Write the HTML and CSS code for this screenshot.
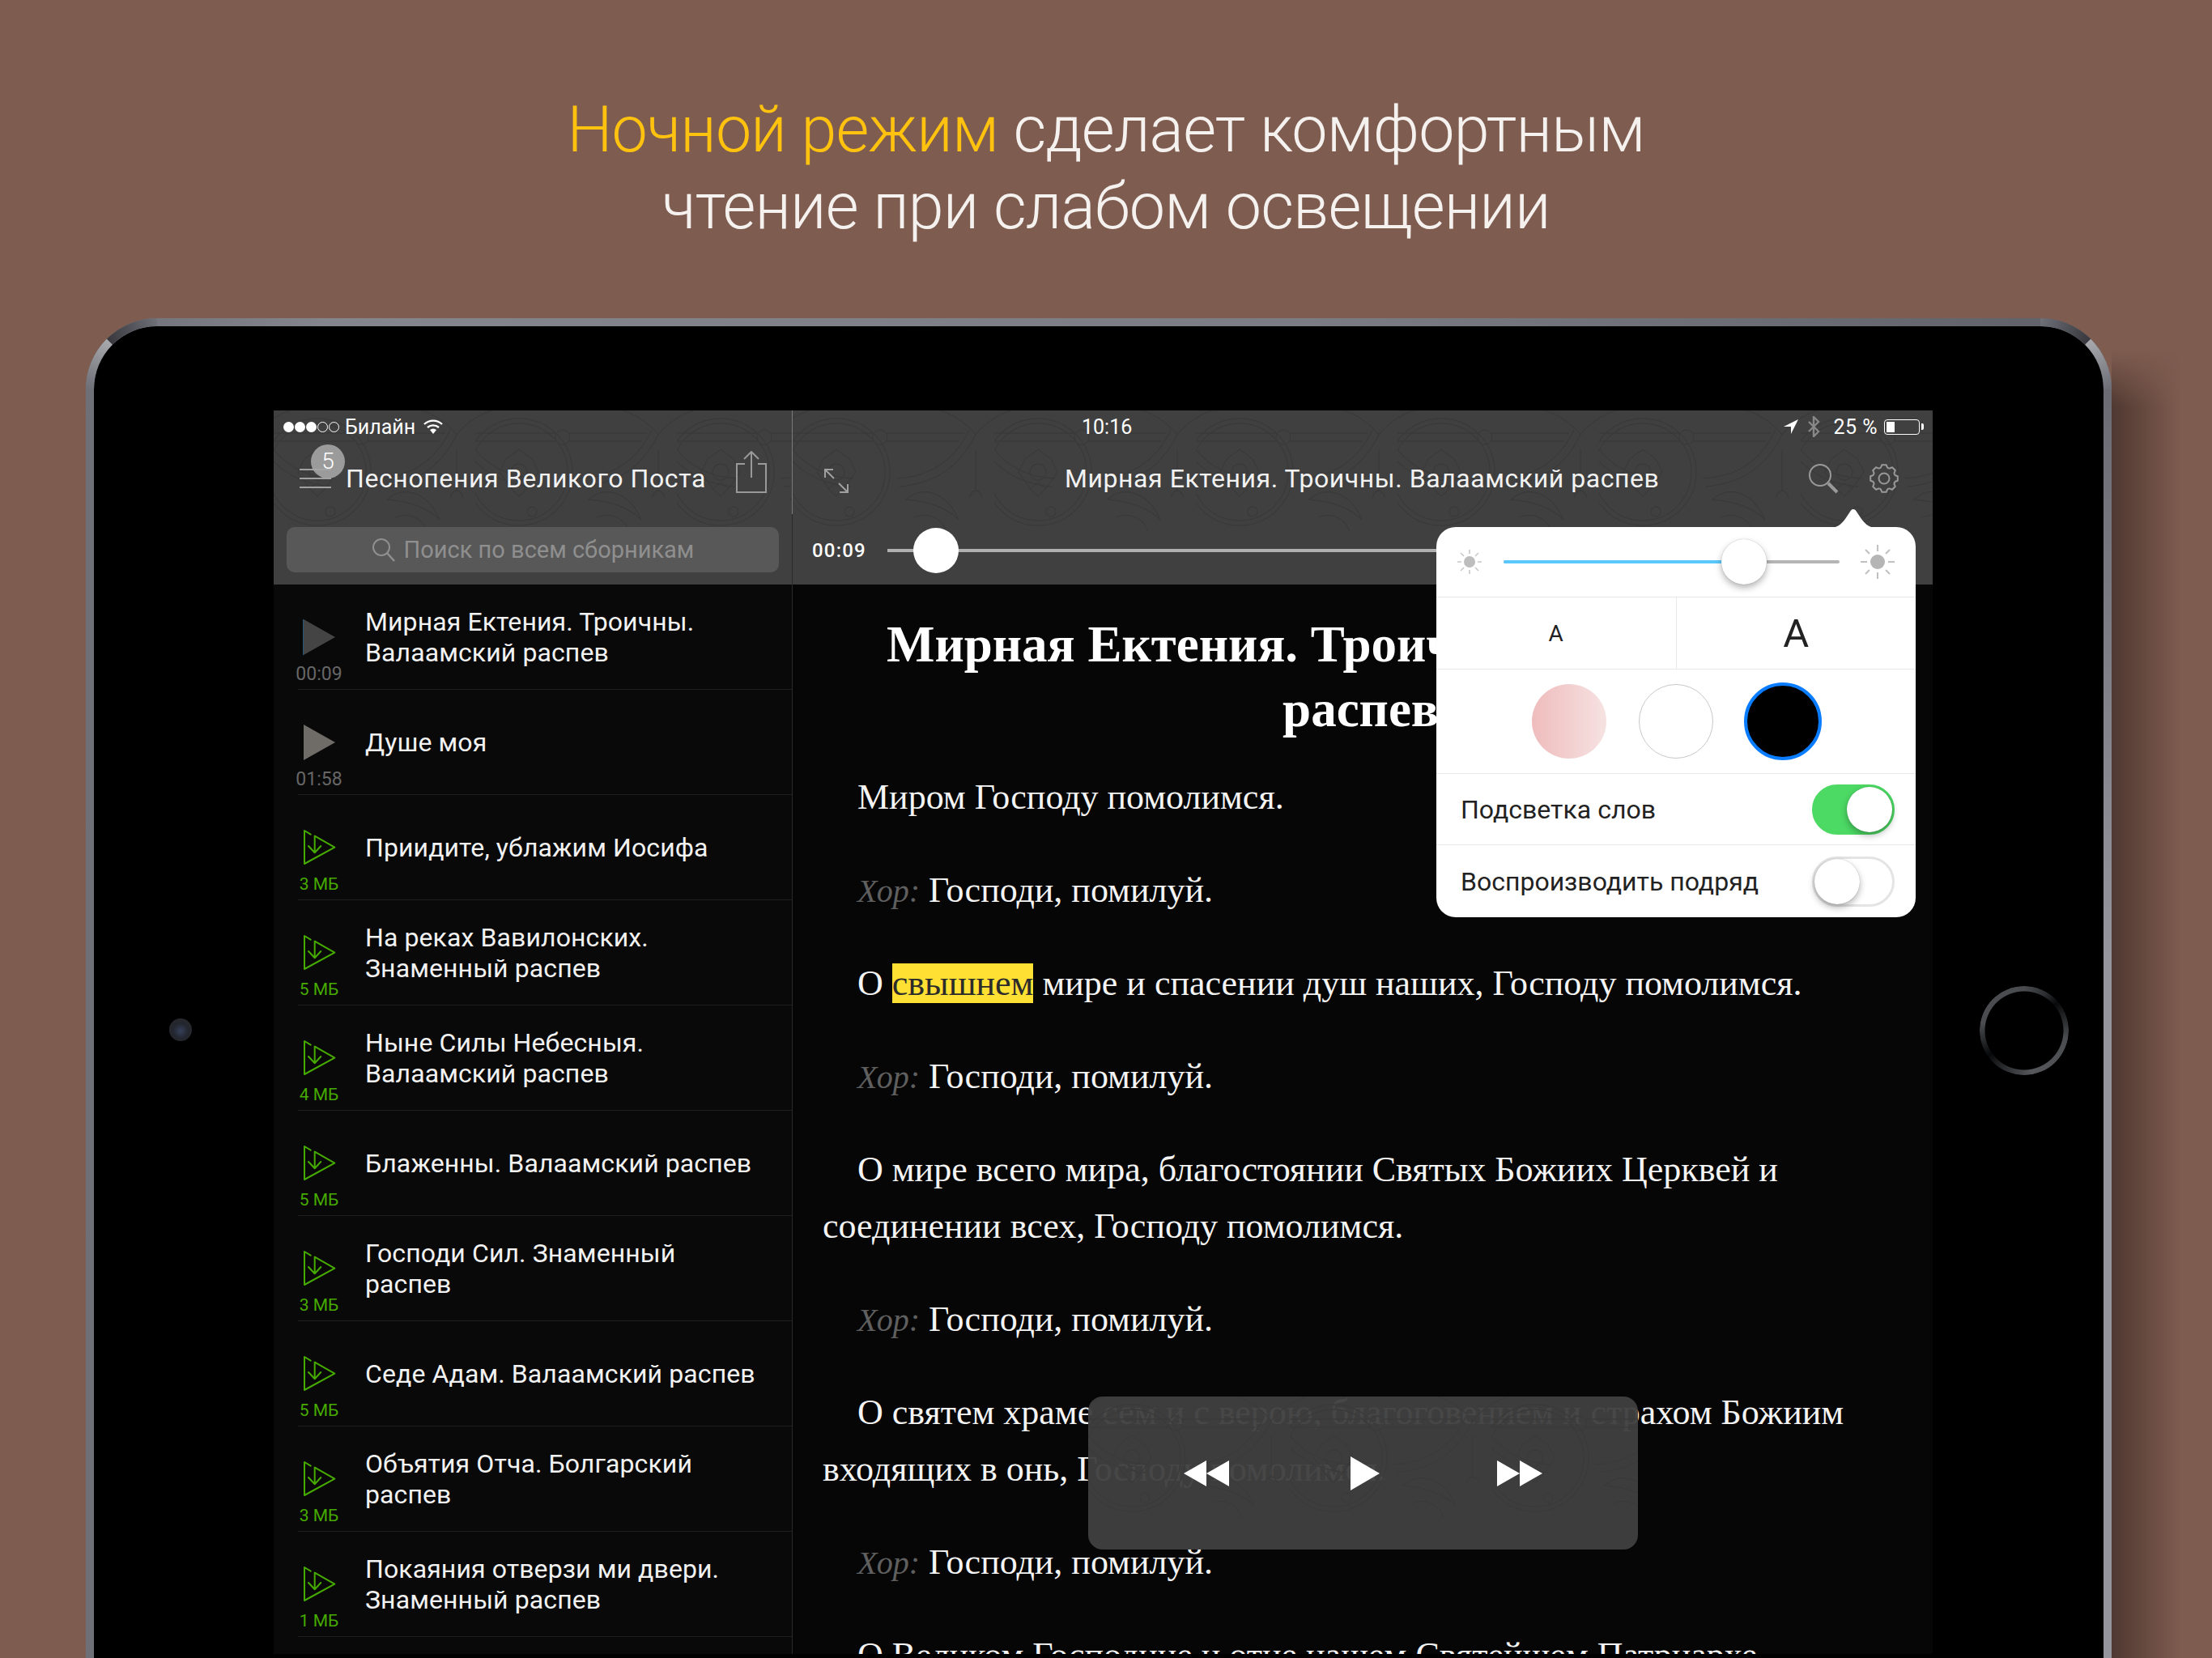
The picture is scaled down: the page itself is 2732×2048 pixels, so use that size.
FILE: index.html
```html
<!DOCTYPE html>
<html lang="ru">
<head>
    <meta charset="UTF-8">
    <title>Ночной режим</title>
    <link rel="stylesheet" href="styles.css">
</head>
<body>
<svg class="defs" width="0" height="0">
    <defs>
        <linearGradient id="arcDark" gradientUnits="userSpaceOnUse" x1="29" y1="29" x2="88" y2="5">
            <stop offset="0" stop-color="#38383e"/>
            <stop offset="1" stop-color="#6e6f77"/>
        </linearGradient>
        <linearGradient id="arcLight" gradientUnits="userSpaceOnUse" x1="29" y1="29" x2="5" y2="88">
            <stop offset="0" stop-color="#a8a9ad"/>
            <stop offset="1" stop-color="#6e6f77"/>
        </linearGradient>
        <pattern id="ornament" width="249" height="215" patternUnits="userSpaceOnUse">
            <g fill="none" stroke="#393939" stroke-width="1.300">
                <path d="M0 28H100M116 28H212M0 38H100M116 38H206"/>
                <circle cx="108" cy="33" r="9"/>
                <circle cx="54" cy="76" r="66"/>
                <circle cx="54" cy="76" r="60"/>
                <circle cx="54" cy="76" r="10"/>
                <path d="M54 48l16 12 8 16-14 20-10-6-10 6-14-20 8-16zM44 96l10 10 10-10"/>
                <circle cx="70" cy="125" r="6"/>
                <path d="M226 30C206 70 176 90 132 94M218 24C200 62 170 82 128 84"/>
                <path d="M226 30C246 70 276 90 320 94M234 24C252 62 282 82 324 84" transform="translate(-249)"/>
                <path d="M226 30C212 12 194 2 170 -4M226 30C240 12 258 2 282 -4"/>
                <path d="M-23 30C-9 12 9 2 33 -4"/>
                <path d="M140 110C160 92 190 100 205 135C188 118 165 112 140 110zM150 132C170 124 186 136 190 150"/>
                <path d="M226 48V100M218 108C222 96 230 96 234 108"/>
            </g>
        </pattern>
        <path id="tooth" d="M12.470-5.170L14-3.800 16.800-2.700V2.700L14 3.800 12.470 5.170"/>
    </defs>
</svg>

<h1 class="headline"><span class="accent">Ночной режим</span> сделает комфортным<br>чтение при слабом освещении</h1>

<div class="device">
    <svg class="corner corner-left" width="90" height="90" viewBox="0 0 90 90"><path d="M29.300 29.300A83 83 0 0 1 88 5" fill="none" stroke="url(#arcDark)" stroke-width="10"/><path d="M5 88A83 83 0 0 1 29.300 29.300" fill="none" stroke="url(#arcLight)" stroke-width="10"/></svg>
    <svg class="corner corner-right" width="90" height="90" viewBox="0 0 90 90"><path d="M29.300 29.300A83 83 0 0 1 88 5" fill="none" stroke="url(#arcDark)" stroke-width="10"/><path d="M5 88A83 83 0 0 1 29.300 29.300" fill="none" stroke="url(#arcLight)" stroke-width="10"/></svg>
    <div class="bezel">
        <div class="camera"></div>
        <div class="home-button"></div>
        <div class="screen">
            <aside class="sidebar">
                <div class="bar">
                    <svg class="ornament"><rect width="100%" height="100%" fill="url(#ornament)"/></svg>
                    <div class="status">
                        <span class="signal"><i class="dot"></i><i class="dot"></i><i class="dot"></i><i class="dot off"></i><i class="dot off"></i></span>
                        <span>Билайн</span>
                        <svg class="wifi" width="26" height="18" viewBox="0 0 26 18"><path d="M2 6a16 16 0 0 1 22 0M6 10a10.500 10.500 0 0 1 14 0" fill="none" stroke="#fff" stroke-width="2.400"/><path d="M9 13a6 6 0 0 1 8 0l-4 5z" fill="#fff"/></svg>
                    </div>
                    <div class="nav nav-left">
                        <div class="burger">
                            <i></i><i></i><i></i>
                            <span class="badge">5</span>
                        </div>
                        <span class="nav-title">Песнопения Великого Поста</span>
                        <svg class="share" width="38" height="52" viewBox="0 0 38 52"><path d="M11 16H1V51H37V16H27M19 33V2M10 10l9-9 9 9" fill="none" stroke="#999" stroke-width="2"/></svg>
                    </div>
                    <div class="search-wrap">
                        <div class="search">
                            <svg width="30" height="30" viewBox="0 0 30 30"><circle cx="12" cy="12" r="10" fill="none" stroke="#8f8f8f" stroke-width="2"/><path d="M19 19l9 10" stroke="#8f8f8f" stroke-width="2.500"/></svg>
                            <span>Поиск по всем сборникам</span>
                        </div>
                    </div>
                </div>
                <ul class="tracks">
                    <li class="track">
                        <div class="track-side"><span class="tri tri-current"></span><span class="size">00:09</span></div>
                        <div class="track-name">Мирная Ектения. Троичны.<br>Валаамский распев</div>
                    </li>
                    <li class="track">
                        <div class="track-side"><span class="tri"></span><span class="size">01:58</span></div>
                        <div class="track-name">Душе моя</div>
                    </li>
                    <li class="track">
                        <div class="track-side"><svg class="dl"><use href="#dl"/></svg><span class="size mb">3 МБ</span></div>
                        <div class="track-name">Приидите, ублажим Иосифа</div>
                    </li>
                    <li class="track">
                        <div class="track-side"><svg class="dl"><use href="#dl"/></svg><span class="size mb">5 МБ</span></div>
                        <div class="track-name">На реках Вавилонских.<br>Знаменный распев</div>
                    </li>
                    <li class="track">
                        <div class="track-side"><svg class="dl"><use href="#dl"/></svg><span class="size mb">4 МБ</span></div>
                        <div class="track-name">Ныне Силы Небесныя.<br>Валаамский распев</div>
                    </li>
                    <li class="track">
                        <div class="track-side"><svg class="dl"><use href="#dl"/></svg><span class="size mb">5 МБ</span></div>
                        <div class="track-name">Блаженны. Валаамский распев</div>
                    </li>
                    <li class="track">
                        <div class="track-side"><svg class="dl"><use href="#dl"/></svg><span class="size mb">3 МБ</span></div>
                        <div class="track-name">Господи Сил. Знаменный<br>распев</div>
                    </li>
                    <li class="track">
                        <div class="track-side"><svg class="dl"><use href="#dl"/></svg><span class="size mb">5 МБ</span></div>
                        <div class="track-name">Седе Адам. Валаамский распев</div>
                    </li>
                    <li class="track">
                        <div class="track-side"><svg class="dl"><use href="#dl"/></svg><span class="size mb">3 МБ</span></div>
                        <div class="track-name">Объятия Отча. Болгарский<br>распев</div>
                    </li>
                    <li class="track">
                        <div class="track-side"><svg class="dl"><use href="#dl"/></svg><span class="size mb">1 МБ</span></div>
                        <div class="track-name">Покаяния отверзи ми двери.<br>Знаменный распев</div>
                    </li>
                </ul>
            </aside>

            <main class="reader">
                <div class="bar">
                    <svg class="ornament"><rect width="100%" height="100%" fill="url(#ornament)"/></svg>
                    <div class="status status-right">
                        <span class="clock">10:16</span>
                        <div class="status-icons">
                            <svg class="loc" width="20" height="20" viewBox="0 0 20 20"><path d="M19 1L1 10h9v9z" fill="#fff"/></svg>
                            <svg class="bt" width="16" height="26" viewBox="0 0 16 26"><path d="M2 7l12 12-6 6V1l6 6L2 19" fill="none" stroke="#888" stroke-width="2.400"/></svg>
                            <span class="percent">25 %</span>
                            <div class="battery"><i></i></div>
                        </div>
                    </div>
                    <div class="nav nav-right">
                        <svg class="expand" width="32" height="32" viewBox="0 0 32 32"><path d="M2 12V2H12M2 2L13 13M30 20V30H20M30 30L19 19" fill="none" stroke="#a0a0a0" stroke-width="2"/></svg>
                        <span class="nav-title reader-title">Мирная Ектения. Троичны. Валаамский распев</span>
                        <svg class="tool" width="38" height="38" viewBox="0 0 38 38"><circle cx="15" cy="15" r="13" fill="none" stroke="#999" stroke-width="2"/><path d="M25 25l11 11" stroke="#999" stroke-width="4"/></svg>
                        <svg class="tool" width="38" height="38" viewBox="-19 -19 38 38">
                            <g fill="none" stroke="#999" stroke-width="2" stroke-linejoin="round">
                                <circle r="6.500"/>
                                <use href="#tooth"/>
                                <use href="#tooth" transform="rotate(45)"/>
                                <use href="#tooth" transform="rotate(90)"/>
                                <use href="#tooth" transform="rotate(135)"/>
                                <use href="#tooth" transform="rotate(180)"/>
                                <use href="#tooth" transform="rotate(225)"/>
                                <use href="#tooth" transform="rotate(270)"/>
                                <use href="#tooth" transform="rotate(315)"/>
                            </g>
                        </svg>
                    </div>
                    <div class="seek">
                        <span class="seek-time">00:09</span>
                        <div class="seek-track"><span class="seek-thumb"></span></div>
                    </div>
                </div>
                <article class="text">
                    <h2 class="title">Мирная Ектения. Троичны. Валаамский<br>распев</h2>
                    <p>Миром Господу помолимся.</p>
                    <p><em>Хор:</em> Господи, помилуй.</p>
                    <p>О <mark>свышнем</mark> мире и спасении душ наших, Господу помолимся.</p>
                    <p><em>Хор:</em> Господи, помилуй.</p>
                    <p>О мире всего мира, благостоянии Святых Божиих Церквей и соединении всех, Господу помолимся.</p>
                    <p><em>Хор:</em> Господи, помилуй.</p>
                    <p>О святем храме сем и с верою, благоговением и страхом Божиим входящих в онь, Господу помолимся.</p>
                    <p><em>Хор:</em> Господи, помилуй.</p>
                    <p>О Великом Господине и отце нашем Святейшем Патриархе</p>
                </article>

                <div class="player">
                    <svg class="ornament"><rect width="100%" height="100%" fill="url(#ornament)"/></svg>
                    <svg class="ctl" width="56" height="32" viewBox="0 0 56 32"><path d="M28 0V32L0 16zM56 0V32L28 16z" fill="#fff"/></svg>
                    <svg class="ctl" width="36" height="42" viewBox="0 0 36 42"><path d="M0 0V42L36 21z" fill="#fff"/></svg>
                    <svg class="ctl ctl-ff" width="56" height="32" viewBox="0 0 56 32"><path d="M0 0V32L28 16zM28 0V32L56 16z" fill="#fff"/></svg>
                </div>
            </main>

            <div class="popover">
                <svg class="popover-arrow" width="64" height="27" viewBox="0 0 64 27"><path d="M0 27C12 27 16 24 22 16L28 7C30 3 34 3 36 7L42 16C48 24 52 27 64 27z" fill="#fff"/></svg>
                <div class="pop-row pop-bright">
                    <svg width="32" height="32" viewBox="0 0 32 32"><circle cx="16" cy="16" r="7" fill="#bdbdbd"/><path d="M16 1v5M16 26v5M1 16h5M26 16h5M5 5l4 4M23 23l4 4M5 27l4-4M23 9l4-4" stroke="#c8c8c8" stroke-width="1.600"/></svg>
                    <div class="bright-track"><span class="bright-fill"></span><span class="knob bright-knob"></span></div>
                    <svg width="44" height="44" viewBox="0 0 44 44"><circle cx="22" cy="22" r="9" fill="#b5b5b5"/><path d="M22 1v8M22 35v8M1 22h8M35 22h8M7 7l5 5M32 32l5 5M7 37l5-5M32 12l5-5" stroke="#c0c0c0" stroke-width="2"/></svg>
                </div>
                <div class="pop-row pop-font">
                    <div class="font-cell font-small">A</div>
                    <div class="font-cell font-big">A</div>
                </div>
                <div class="pop-row pop-themes">
                    <span class="theme theme-pink"></span>
                    <span class="theme theme-white"></span>
                    <span class="theme theme-black"></span>
                </div>
                <div class="pop-row pop-option">
                    <span>Подсветка слов</span>
                    <span class="toggle on"><span class="knob"></span></span>
                </div>
                <div class="pop-row pop-option">
                    <span>Воспроизводить подряд</span>
                    <span class="toggle"><span class="knob"></span></span>
                </div>
            </div>
        </div>
    </div>
</div>

<svg class="defs" width="0" height="0">
    <symbol id="dl" viewBox="0 0 42 46">
        <g fill="none" stroke="#46ab00" stroke-width="2" stroke-linejoin="round" stroke-linecap="round">
            <path d="M10.700 6.700L3 2V43L40.300 22.700L15.700 8.700"/>
            <path d="M15.700 8.700V29.300M8 21L15.700 29.300L23.300 21"/>
        </g>
    </symbol>
</svg>
</body>
</html>
```

FILE: styles.css
```css
* {
    box-sizing: border-box;
}
html, body {
    height: 2048px;
    overflow: hidden;
}
body {
    margin: 0;
    background-color: #7f5c50;
    font-family: Roboto, "Liberation Sans", sans-serif;
}
.defs {
    position: absolute;
}
.headline {
    height: 393px;
    margin: 0;
    padding-top: 113px;
    text-align: center;
    font-size: 79px;
    line-height: 95px;
    letter-spacing: -0.800px;
    font-weight: 300;
    color: #f4f1ef;
}
.accent {
    color: #ffc20e;
}

/* device */
.device {
    position: relative;
    margin-left: 106px;
    width: 2502px;
    height: 1655px;
    padding: 10px 10px 0;
    border-radius: 88px 88px 0 0;
    background: linear-gradient(90deg, #6e6f77 0%, #85868d 12%, #7b7c84 60%, #5f6068 100%);
}
.device::before {
    content: "";
    position: absolute;
    left: 100%;
    top: 40px;
    width: 85px;
    height: 100%;
    background: linear-gradient(90deg, rgba(0, 0, 0, 0.38), rgba(0, 0, 0, 0));
    -webkit-mask: linear-gradient(180deg, transparent 0, #000 70px);
    mask: linear-gradient(180deg, transparent 0, #000 70px);
}
.device::after {
    content: "";
    position: absolute;
    right: 0;
    top: 85px;
    bottom: 0;
    width: 10px;
    background: linear-gradient(180deg, #6a6b73 0%, #94959d 45%, #94959d 100%);
}
.corner {
    position: absolute;
    top: 0;
    z-index: 1;
}
.corner-left {
    left: 0;
}
.corner-right {
    right: 0;
    transform: scaleX(-1);
}
.bezel {
    position: relative;
    height: 100%;
    background: #000;
    border-radius: 78px 78px 0 0;
    padding: 104px 0 0 222px;
}
.camera {
    position: absolute;
    left: 93px;
    top: 855px;
    width: 28px;
    height: 28px;
    border-radius: 50%;
    background: radial-gradient(circle at 50% 55%, #35405a 0%, #23262e 45%, #2a2a2c 100%);
}
.home-button {
    position: absolute;
    left: 2329px;
    top: 815px;
    width: 110px;
    height: 110px;
    border-radius: 50%;
    background: conic-gradient(#4a4c50 0deg, #2c2d30 30deg, #08090a 50deg, #4a4c50 100deg, #55575b 170deg, #1d1e20 220deg, #08090a 235deg, #4a4c50 280deg, #4a4c50 360deg);
    -webkit-mask: radial-gradient(circle, transparent 48px, #000 49px);
    mask: radial-gradient(circle, transparent 48px, #000 49px);
}
.screen {
    position: relative;
    display: flex;
    width: 2049px;
    height: 1536px;
    overflow: hidden;
    background: #060606;
}

/* header bars */
.bar {
    position: relative;
    height: 215px;
    background: #404040;
    flex-shrink: 0;
}
.ornament {
    position: absolute;
    left: 0;
    top: 0;
    width: 100%;
    height: 100%;
}
.status {
    position: relative;
    display: flex;
    align-items: center;
    height: 40px;
    padding-left: 12px;
    font-size: 25px;
    color: #fff;
}
.signal {
    display: flex;
    gap: 1px;
    margin-right: 7px;
}
.dot {
    width: 13px;
    height: 13px;
    border-radius: 50%;
    background: #fff;
}
.dot.off {
    background: none;
    border: 1px solid #fff;
}
.wifi {
    margin-left: 9px;
}
.status-right {
    justify-content: space-between;
    padding: 0 12px 0 0;
}
.clock {
    margin-left: 357px;
}
.status-icons {
    display: flex;
    align-items: center;
    gap: 8px;
}
.loc {
    margin-right: 2px;
}
.bt {
    margin-right: 8px;
}
.percent {
    letter-spacing: 0.5px;
}
.battery {
    position: relative;
    width: 44px;
    height: 19px;
    border: 1.500px solid #fff;
    border-radius: 4px;
    padding: 2px;
    margin-right: 4px;
}
.battery i {
    display: block;
    width: 10px;
    height: 100%;
    background: #fff;
}
.battery::after {
    content: "";
    position: absolute;
    right: -6px;
    top: 4px;
    width: 3px;
    height: 8px;
    background: #fff;
    border-radius: 0 2px 2px 0;
}
.nav {
    position: relative;
    display: flex;
    align-items: center;
    height: 88px;
}
.nav-left {
    padding-left: 32px;
}
.burger {
    position: relative;
    width: 39px;
    height: 24px;
    display: flex;
    flex-direction: column;
    justify-content: space-between;
    margin-right: 18px;
}
.burger i {
    display: block;
    height: 2px;
    background: #a0a0a0;
}
.badge {
    position: absolute;
    left: 14px;
    top: -30px;
    width: 42px;
    height: 42px;
    border-radius: 50%;
    background: rgba(165, 165, 165, 0.9);
    color: #fff;
    font-size: 28px;
    font-weight: 300;
    text-align: center;
    line-height: 42px;
}
.nav-title {
    font-size: 32px;
    color: #f2f2f2;
    letter-spacing: 0.6px;
    white-space: nowrap;
}
.share {
    margin-left: 37px;
    margin-top: -16px;
}
.search-wrap {
    position: relative;
    padding: 16px 16px 0;
}
.search {
    display: flex;
    align-items: center;
    justify-content: center;
    gap: 10px;
    height: 56px;
    background: #585858;
    border-radius: 10px;
    color: #8f8f8f;
    font-size: 29px;
}

/* left list */
.sidebar {
    width: 641px;
    display: flex;
    flex-direction: column;
    flex-shrink: 0;
    border-right: 1px solid #2a2a2a;
    position: relative;
    background: #090909;
}
.sidebar > .bar::after {
    content: "";
    position: absolute;
    left: 100%;
    top: 0;
    width: 1px;
    height: 128px;
    background: #7a7a7a;
}
.tracks {
    list-style: none;
    margin: 0;
    padding: 0 0 0 30px;
}
.track {
    position: relative;
    display: flex;
    align-items: center;
    height: 130px;
    border-bottom: 1px solid #1f1f1f;
    padding-left: 83px;
}
.track-side {
    position: absolute;
    left: -2px;
    top: 0;
    width: 56px;
    height: 129px;
    display: flex;
    flex-direction: column;
    align-items: center;
}
.tri {
    margin-top: 43px;
    width: 0;
    height: 0;
    border-style: solid;
    border-width: 22px 0 22px 39px;
    border-color: transparent transparent transparent #6f6c68;
}
.tri-current {
    border-left-color: #444;
    box-shadow: -1px 0 0 #27587a;
}
.dl {
    margin-top: 42px;
    width: 42px;
    height: 46px;
}
.size {
    position: absolute;
    top: 97px;
    font-size: 23px;
    color: #666;
    white-space: nowrap;
}
.mb {
    font-size: 21px;
    top: 98px;
    color: #46ab00;
}
.track-name {
    font-size: 32px;
    line-height: 38px;
    color: #f2f2f2;
    letter-spacing: 0.1px;
}

/* reader */
.reader {
    position: relative;
    flex: 1;
    display: flex;
    flex-direction: column;
    min-width: 0;
}
.nav-right {
    padding: 0 41px 0 38px;
}
.expand {
    margin-top: 6px;
}
.reader-title {
    margin-left: 266px;
    flex: 1;
    letter-spacing: 0.560px;
}
.tool {
    margin-left: 37px;
}
.seek {
    position: relative;
    display: flex;
    align-items: center;
    height: 87px;
    padding-left: 24px;
    padding-top: 3px;
}
.seek-time {
    font-size: 24px;
    font-weight: 500;
    color: #fff;
    width: 93px;
    letter-spacing: 1.200px;
}
.seek-track {
    position: relative;
    flex: 1;
    height: 4px;
    background: #b0b0b0;
    margin-right: 60px;
}
.seek-thumb {
    position: absolute;
    left: 32px;
    top: -26px;
    width: 56px;
    height: 56px;
    border-radius: 50%;
    background: #fff;
}
.text {
    padding: 34px 42px 0 37px;
    color: #f4f4f4;
    font-family: "Liberation Serif", serif;
    font-size: 44px;
    line-height: 70px;
}
.title {
    margin: 0 0 34px;
    text-align: center;
    font-size: 63px;
    line-height: 80px;
    font-weight: 700;
    color: #fff;
}
.text p {
    margin: 0 0 45px;
    text-indent: 43px;
}
.text em {
    font-size: 40px;
    line-height: 0;
    color: #5f5f5f;
}
.text mark {
    background: #ffe033;
    color: #2b2b2b;
}
.player {
    position: absolute;
    left: 365px;
    top: 1218px;
    width: 679px;
    height: 189px;
    border-radius: 18px;
    background: rgba(64, 64, 64, 0.96);
    overflow: hidden;
    display: flex;
    align-items: center;
    justify-content: center;
    gap: 150px;
}
.ctl {
    position: relative;
}
.ctl-ff {
    margin-left: -5px;
}

/* settings popover */
.popover {
    position: absolute;
    left: 1436px;
    top: 144px;
    width: 592px;
    background: #fff;
    border-radius: 24px;
    color: #222;
}
.popover-arrow {
    position: absolute;
    right: 45px;
    top: -26px;
}
.pop-row {
    display: flex;
    align-items: center;
    border-bottom: 1px solid #e8e8e8;
}
.pop-row:last-child {
    height: 89px;
    border-bottom: none;
}
.pop-bright {
    height: 87px;
    padding: 0 25px;
    justify-content: space-between;
}
.bright-track {
    position: relative;
    width: 415px;
    height: 4px;
    background: #b5b5b5;
    border-radius: 2px;
}
.bright-fill {
    display: block;
    width: 297px;
    height: 100%;
    background: #5ac8fa;
    border-radius: 2px;
}
.knob {
    display: block;
    width: 56px;
    height: 56px;
    border-radius: 50%;
    background: #fff;
    box-shadow: 0 4px 8px rgba(0, 0, 0, 0.3), 0 0 1px rgba(0, 0, 0, 0.3);
}
.bright-knob {
    position: absolute;
    left: 269px;
    top: -26px;
}
.pop-font {
    height: 89px;
}
.font-cell {
    flex: 1;
    height: 100%;
    display: flex;
    align-items: center;
    justify-content: center;
}
.font-small {
    font-size: 28px;
    border-right: 1px solid #e8e8e8;
}
.font-big {
    font-size: 49px;
}
.pop-themes {
    height: 129px;
    padding-left: 118px;
    gap: 40px;
}
.theme {
    width: 92px;
    height: 92px;
    border-radius: 50%;
}
.theme-pink {
    background: linear-gradient(90deg, #efbcbc, #f6e2e2);
}
.theme-white {
    border: 1px solid #c8c8c8;
}
.theme-black {
    width: 96px;
    height: 96px;
    background: #000;
    border: 4px solid #0a7cff;
    margin-left: -2px;
}
.pop-option {
    height: 88px;
    padding: 0 26px 0 30px;
    justify-content: space-between;
    font-size: 32px;
}
.toggle {
    width: 102px;
    height: 62px;
    border-radius: 31px;
    border: 3px solid #e4e4e4;
    display: flex;
    align-items: center;
}
.toggle.on {
    background: #4cd964;
    border-color: #4cd964;
    justify-content: flex-end;
}
```
